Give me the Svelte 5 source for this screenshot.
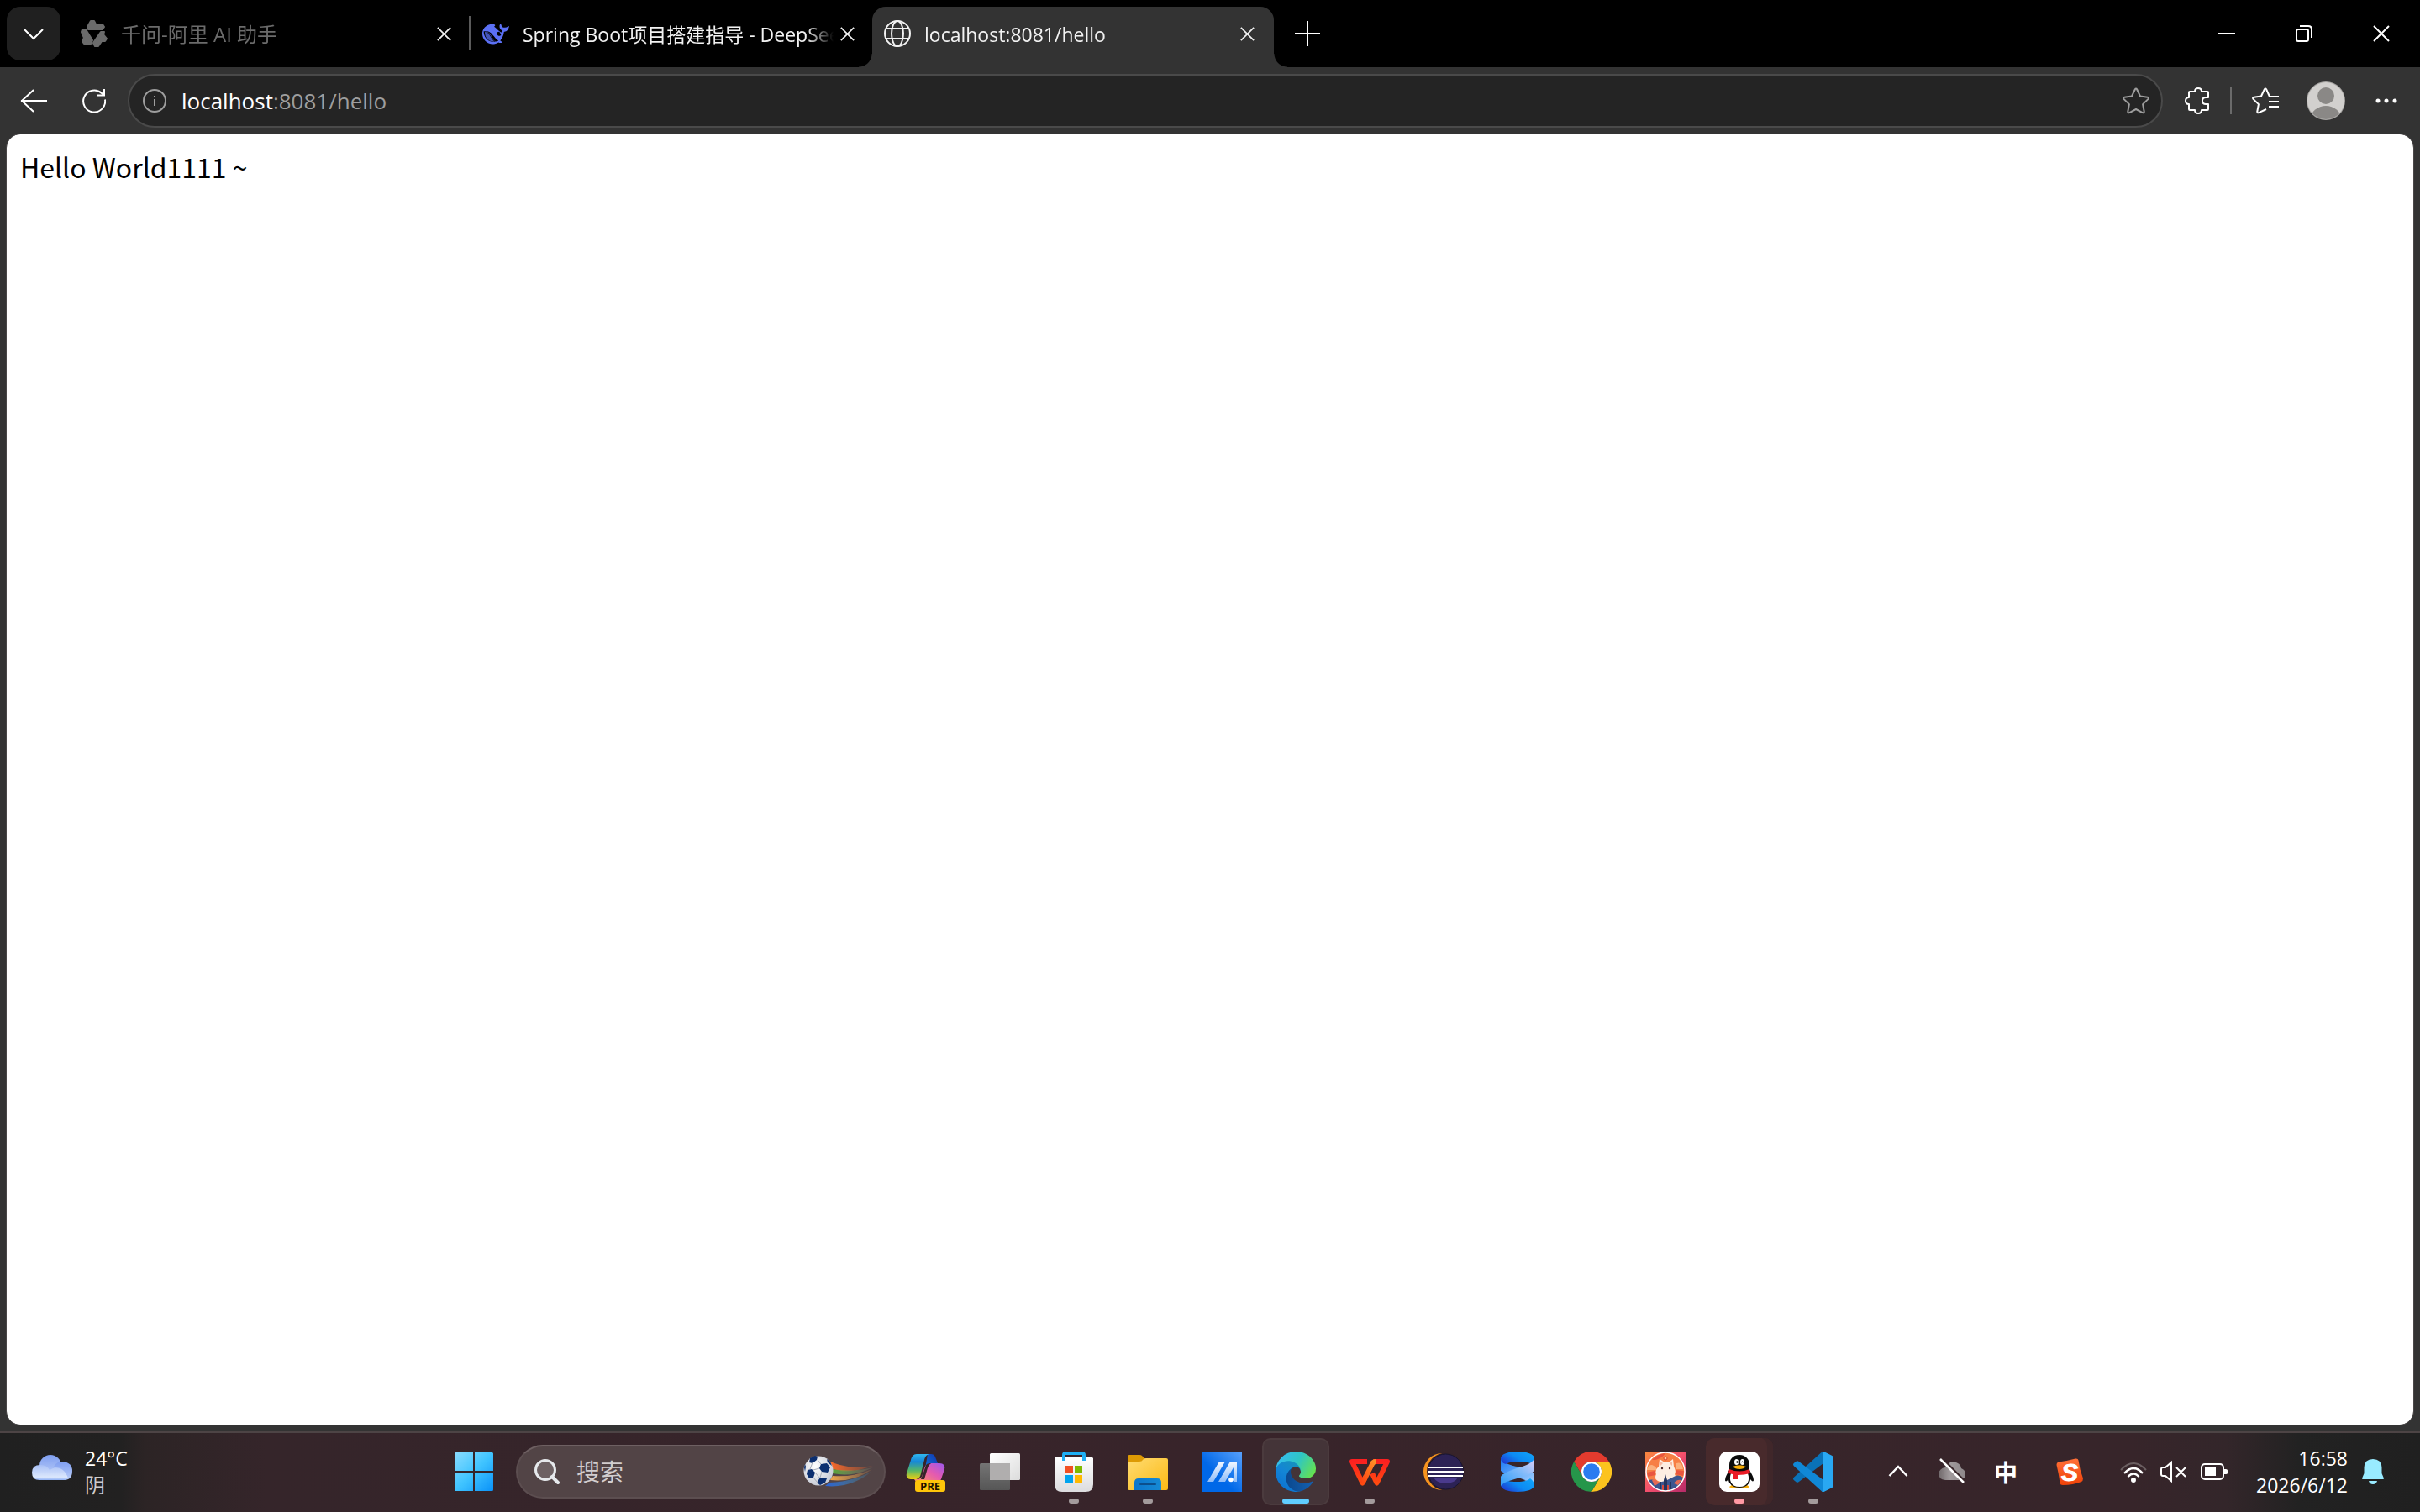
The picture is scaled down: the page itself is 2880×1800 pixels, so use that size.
<script>
  let url = $state("localhost:8081/hello")
  let host = $derived(url.split(":")[0])
  let rest = $derived(url.slice(host.length))
  let query = $state("")

  let tabs = [
    { icon: "qwen", title: "千问-阿里 AI 助手", dim: true },
    { icon: "whale", title: "Spring Boot项目搭建指导 - DeepSeek" },
    { icon: "globe", title: "localhost:8081/hello", active: true },
  ]

  let apps = [
    { id: "copilot", name: "Copilot" },
    { id: "taskview", name: "Task view" },
    { id: "store", name: "Microsoft Store", running: true },
    { id: "explorer", name: "File Explorer", running: true },
    { id: "armoury", name: "MyASUS" },
    { id: "edge", name: "Microsoft Edge", running: true, focused: true },
    { id: "wps", name: "WPS Office", running: true },
    { id: "eclipse", name: "Eclipse" },
    { id: "ribbon", name: "Ribbon" },
    { id: "chrome", name: "Google Chrome" },
    { id: "cat", name: "Cat" },
    { id: "qq", name: "QQ", running: true, alert: true },
    { id: "vscode", name: "Visual Studio Code", running: true },
  ]
</script>

{#snippet cross(size)}
  <svg width={size} height={size} viewBox="0 0 20 20" fill="none" stroke="currentColor" stroke-width="2">
    <path d="M1 1l18 18M19 1L1 19" />
  </svg>
{/snippet}

{#snippet favicon(icon)}
  <svg class="favicon" viewBox="0 0 32 32">
    {#if icon === "qwen"}
      <g fill="#6b6b6b" stroke="#6b6b6b" stroke-width="2" stroke-linejoin="round">
        <path d="M12 1h4l2 4h8l2 3-2 3H9l-1-3z" />
        <path d="M2 11h4l8 13-2 4H4l-2-3 2-4-3-7z" />
        <path d="M24 14h4l-1 3 4 5-2 3h-4l-4 6h-4l-2-4z" />
      </g>
    {:else if icon === "whale"}
      <path fill="#5b70f5" d="M31.6 7.2c-.5-.3-.8.2-1.100.4-1.300 1-2.700 1.400-4.200 1.200-1.200.2-2.300-.3-3-1.300-.6-1.200-.9-2.100-1-3-.2-.5-.8-.6-1.100-.1-.7 1.300-.9 2.600-.6 4 .3 1.500 1.200 2.700 2.400 3.600.4.3.400.700.200 1.200l-.6 1.600c-1.400-.6-2.600-1.500-3.700-2.700-1.600-1.700-2.900-3.200-4.800-4.400.9-.8 1.900-2 .5-2.500C12 4.500 9.400 4.700 6.900 5.700 2.900 7.300 0 11.400 0 16.100c0 6.500 5 12.200 11.400 12.400 2.900.1 5.500-.5 7.800-2.100.8.400 3 .9 4 .3.900-.5.300-.9-.1-1.100-1-.5-1.200-.8-1.700-1.400 2-2.300 3.700-5.500 4.200-9.200.1-.8 0-1.200.8-1.300 3-.3 4.700-2.600 5.300-5.500.1-.4.200-.8-.1-1zM16 25.600c-3.200-2.500-4.700-5.400-6.100-8.100C8.600 15.200 6 13.500 2.800 13.100c1-.3 3.300-.1 5 .7 3.700 1.700 5.600 5.300 8.100 8 1 1.100 2.100 2 3.300 2.600-1 .7-2.100 1.100-3.200 1.200zM21.300 18.500c-.8.3-1.700.300-2.400-.1-1.400-.8-1.400-2.300-.9-3.900.6-1.100 2-.9 2.800-.1.600.8.500 1.600 1.300 2.500.4.700-.1 1.400-.8 1.600z" />
      <path fill="#000" d="M1.600 13.200c3.200-.3 6 1.200 8 4.600 1.700 3 3.400 5.600 6.300 7.800-5 1.300-9.800-1-12.100-4.800-1.500-2.500-2.200-5-2.200-7.600z" />
      <path fill="#5b70f5" d="M3 14c2.500.1 4.600 1.700 6 4.300 1.500 2.800 3.200 5.300 5.500 7.300-4.400.3-8-1.600-10-5C3.400 18.500 3 16.200 3 14z" opacity=".75" />
    {:else}
      <g fill="none" stroke="#f2f2f2" stroke-width="2">
        <circle cx="16" cy="16" r="15" />
        <ellipse cx="16" cy="16" rx="7" ry="15" />
        <path d="M2 10h28M2 22h28" />
      </g>
    {/if}
  </svg>
{/snippet}

{#snippet appIcon(id)}
  <svg class="app-icon" viewBox="0 0 48 48">
    {#if id === "copilot"}
      <path fill="url(#cp-dark)" d="M26 3h4c4 0 5 3 6 6l2 5h-6c-5 0-7 2-8 6l-2 6z" />
      <path fill="url(#cp-left)" d="M13 3h16c-4 0-6 3-7 7l-4 16c-1 5-3 7-7 7H6c-4 0-6-3-5-7L6 10c1-4 3-7 7-7z" />
      <path fill="url(#cp-right)" d="M32 14h8c5 0 7 3 6 7l-3 9c-1 4-3 7-7 7H17c-4 0-5-1-7-4h2c5 0 7-2 8-6l2-7c1-4 4-6 10-6z" />
      <path fill="#38242a" d="M24 16c2-2 4-2 6-2-3 2-4 5-5 9l-3 10h-4l3-8z" />
      <rect x="11" y="34" width="36" height="14" rx="3" fill="#ffc60a" />
      <text x="29" y="45.500" text-anchor="middle" class="badge">PRE</text>
    {:else if id === "taskview"}
      <rect x="0" y="14" width="36" height="32" rx="1.500" fill="url(#tv-back)" />
      <rect x="12" y="2" width="36" height="32" rx="1.500" fill="url(#tv-front)" />
      <path fill="#b0aeae" d="M12 14h24v20H13.500a1.500 1.500 0 0 1-1.500-1.500z" />
    {:else if id === "store"}
      <path fill="url(#st-bag)" d="M2 7h44l1 1v31q0 9-9 9H10q-9 0-9-9V8z" />
      <path d="M12 11V4q0-2 2-2h20q2 0 2 2v7" fill="none" stroke="#1fb0f5" stroke-width="4" />
      <path fill="#f25022" d="M14 17h9v9h-9z" />
      <path fill="#7fba00" d="M25 17h9v9h-9z" />
      <path fill="#00a4ef" d="M14 28h9v9h-9z" />
      <path fill="#ffb900" d="M25 28h9v9h-9z" />
    {:else if id === "explorer"}
      <path fill="#dd9a04" d="M0 6q0-2 2-2h12q2 0 3 1l4 4v6H0z" />
      <path fill="url(#ex-body)" d="M0 12h14q3 0 4-2l1-1q1-1 3-1h24q2 0 2 2v34q0 2-2 2H2q-2 0-2-2z" />
      <path fill="url(#ex-blue)" d="M8 46V37q0-5 5-5h22q5 0 5 5v9z" />
      <path stroke="#0c4f8c" stroke-width="2" stroke-linecap="round" d="M15 39h18" />
    {:else if id === "armoury"}
      <rect width="48" height="48" fill="url(#ar-bg)" />
      <path fill="url(#ar-fg)" d="M7 36l14-24h7L14 36zM20 36l14-24h8v24h-4V19L28 36z" />
      <circle cx="35" cy="33.500" r="2.800" fill="#fff" />
    {:else if id === "edge"}
      <g transform="scale(.1875) translate(-4.630 -4.920)">
        <path fill="url(#ed-dark)" d="M235.680 195.460a93.730 93.730 0 0 1-10.540 4.710 101.870 101.870 0 0 1-35.900 6.460c-47.320 0-88.540-32.550-88.540-74.320A31.480 31.480 0 0 1 117.130 105c-42.800 1.800-53.800 46.400-53.800 72.530 0 73.880 68.090 81.370 82.760 81.370 7.910 0 19.840-2.300 27-4.560l1.310-.44a128.340 128.340 0 0 0 66.600-52.800 4 4 0 0 0-5.320-5.640z" />
        <path fill="url(#ed-mid)" d="M110.340 246.340A79.200 79.200 0 0 1 87.600 225a80.720 80.720 0 0 1 29.530-120c3.120-1.470 8.450-4.130 15.540-4a32.350 32.350 0 0 1 25.690 13 31.880 31.880 0 0 1 6.360 18.660c0-.21 24.460-79.600-80-79.600-43.900 0-80 41.660-80 78.210a130.150 130.150 0 0 0 12.110 56 128 128 0 0 0 156.380 67.110 75.550 75.550 0 0 1-62.780-8z" />
        <path fill="url(#ed-top)" d="M156.940 153.780c-.81 1.050-3.300 2.500-3.300 5.660 0 2.610 1.700 5.120 4.720 7.230 14.380 10 41.490 8.680 41.560 8.680a59.560 59.560 0 0 0 30.270-8.350 61.380 61.380 0 0 0 30.430-52.880c.26-22.410-8-37.310-11.340-43.910C228.090 28.760 182.350 4.920 132.610 4.920a128 128 0 0 0-128 126.200c.48-36.540 36.800-66.050 80-66.050 3.500 0 23.460.34 42 10.070 16.340 8.580 24.900 18.940 30.850 29.210 6.180 10.670 7.280 24.150 7.280 29.520s-2.740 13.330-7.800 19.910z" />
      </g>
    {:else if id === "wps"}
      <g fill="none" stroke-width="6" stroke-linejoin="round">
        <path stroke="url(#wp-red)" d="M21 12H3l12.500 25.500 4-8" />
        <path stroke="url(#wp-red)" d="M28 12h17L32.500 37.500 27 26" />
        <path stroke="url(#wp-orange)" d="M15.500 37.500L27 15q1-3 5-3" />
      </g>
    {:else if id === "eclipse"}
      <circle cx="22" cy="24" r="22" fill="#f7941e" />
      <circle cx="26.500" cy="24" r="22.500" fill="#38242a" />
      <circle cx="26.500" cy="24" r="21" fill="#2c2255" stroke="#171430" />
      <path fill="#4a3a8c" d="M12 31h29q-4 7-14.500 7T12 31z" />
      <g fill="#fff">
        <path d="M6 18h41v2H6zM5 23h43v2.500H5zM6 28h41v2H6z" />
      </g>
    {:else if id === "ribbon"}
      <path fill="url(#rb-dark)" d="M4 8v15q8 6 20 9 14 3 20 8V26q-8-6-20-8Q10 16 4 8z" />
      <path fill="url(#rb-top)" d="M4 8c0-5 9-8 20-8s20 3 20 8c0 3-2 5-5 6-4-2-9-2-15-2s-11 1-14 3c-4-1-6-4-6-7z" />
      <path fill="url(#rb-top)" d="M4 40c0-3 2-5 5-7 4 3 9 3 15 3s12-1 15-4c3 2 5 5 5 8 0 5-9 8-20 8S4 45 4 40z" />
      <path fill="#38242a" d="M13 14q10-4 22 0l-10 4q-7-1-12-4zM17 34l8-3 8 3q-8 3-16 0z" />
      <path fill="url(#rb-band)" d="M4 41V30c2-4 9-6 16-9 10-3 20-6 24-12v13c-2 5-10 6-17 9-9 3-18 4-23 10z" />
    {:else if id === "chrome"}
      <path fill="#e33b2e" d="M3.200 12a24 24 0 0 1 41.600 0H24a12 12 0 0 0-10.400 18z" />
      <path fill="#fcc31e" d="M44.800 12A24 24 0 0 1 24 48l10.400-18A12 12 0 0 0 24 12z" />
      <path fill="#26964a" d="M24 48A24 24 0 0 1 3.200 12l10.400 18a12 12 0 0 0 20.800 0z" />
      <circle cx="24" cy="24" r="12" fill="#fff" />
      <circle cx="24" cy="24" r="9.800" fill="#2b7bf0" />
    {:else if id === "cat"}
      <rect width="48" height="48" fill="url(#ct-bg)" />
      <circle cx="24" cy="24" r="23" fill="#f77f45" />
      <path fill="#fbb07c" d="M2 20q4-6 8-3 3 1 4 5H2zM37 14q5-2 7 3l1 4h-9z" />
      <path fill="#e9563f" d="M8 10q8-8 16-8-4 6-12 8zM36 22l10 1-1 6-9-2zM2 25l9-2 1 5-9 2z" />
      <circle cx="24" cy="8" r="2" fill="#ffd0a0" stroke="#d8432f" />
      <path fill="#fdeee2" d="M16 18l1-9 6 4q3-1 5 0l5-4 1 9q3 5 1 9 3 5-2 8l-9 4-9-4q-5-3-2-8-2-5 3-9z" />
      <path fill="#f7b9a0" d="M18 12l3 2-3 3zM32 12l-3 2 3 3z" />
      <circle cx="20" cy="20" r="1.200" fill="#4b2b2b" />
      <circle cx="29" cy="20" r="1.200" fill="#4b2b2b" />
      <path fill="#3c568f" d="M4 34q6-2 11 3l9-2 8-4q7-5 13 0-2 9-11 14l-10 2-10-2Q6 41 4 34z" />
      <path fill="#e56a55" d="M8 34q5-2 8 4l-5 3zM34 38q3-5 9-4l-4 6z" />
      <path fill="#26345e" d="M24 27l2 7v13h-4V34zM17 36h2v11h-2zM29 36h2v11h-2z" />
      <path fill="#d94a3e" d="M20 40h2v8h-2zM26 40h2v8h-2z" />
      <circle cx="24" cy="24" r="23" fill="none" stroke="#fff" stroke-width="1.500" />
    {:else if id === "qq"}
      <rect width="48" height="48" rx="9" fill="#fff" />
      <path fill="#f9ae08" d="M12 42q3-3 7-3h10q4 0 7 3 0 1-2 1H14q-2 0-2-1z" />
      <path fill="#0b0b0b" d="M24 4c8 0 12 6 12 12v6c2 4 5 8 5 12 0 2-2 2-4-1 0 5-5 10-13 10S11 38 11 33c-2 3-4 3-4 1 0-4 3-8 5-12v-6C12 10 16 4 24 4z" />
      <path fill="#fff" d="M14 26h20c3 8 0 16-10 16S11 34 14 26z" />
      <ellipse cx="20.500" cy="12.500" rx="2.500" ry="3.500" fill="#fff" />
      <ellipse cx="27.500" cy="12.500" rx="2.500" ry="3.500" fill="#fff" />
      <circle cx="21.500" cy="12.500" r="1.200" />
      <path d="M26 13q1.500-2 3 0" fill="none" stroke="#000" />
      <path fill="#f9ae08" d="M16 18q8-3.500 16 0-3 3-8 3t-8-3z" />
      <path fill="#eb1c26" d="M12 21q12 5 24 0l1 5q-7 2-15 2v5h-6v-6l-5-1z" />
    {:else if id === "vscode"}
      <path fill="#0a72b8" d="M36 0v14L6.500 36.300q-1.500 1-3 0L.8 34q-1.600-1.600 0-3.200L33 1.500Q34.500 0 36 0z" />
      <path fill="#1088d6" d="M36 48V34L6.500 11.700q-1.500-1-3 0L.8 14q-1.600 1.600 0 3.200L33 46.500q1.500 1.500 3 1.500z" />
      <path fill="#29a8f2" d="M34 47.500q2-.5 2-3V3.500q0-2.500-2-3 1-1 3-.200L46.500 5Q48 6 48 8v32q0 2-1.500 3L37 47.700q-2 .8-3-.200z" />
    {/if}
  </svg>
{/snippet}

<svg class="defs" width="0" height="0" aria-hidden="true">
  <defs>
    <linearGradient id="cp-dark" x1="0" y1="1" x2="1" y2="0"><stop offset="0" stop-color="#0a7be0" /><stop offset="1" stop-color="#1336b0" /></linearGradient>
    <linearGradient id="cp-left" x1="0" y1="0" x2="0" y2="1"><stop offset="0" stop-color="#30b8f0" /><stop offset=".3" stop-color="#1687d8" /><stop offset=".65" stop-color="#55b768" /><stop offset="1" stop-color="#f0d010" /></linearGradient>
    <linearGradient id="cp-right" x1="1" y1="0" x2="0" y2="1"><stop offset="0" stop-color="#9a58ee" /><stop offset=".45" stop-color="#e45ab0" /><stop offset="1" stop-color="#ff9a5c" /></linearGradient>
    <linearGradient id="tv-back" x1="0" y1="0" x2="0" y2="1"><stop offset="0" stop-color="#747474" /><stop offset="1" stop-color="#565656" /></linearGradient>
    <linearGradient id="tv-front" x1="0" y1="0" x2="1" y2="1"><stop offset="0" stop-color="#fff" /><stop offset="1" stop-color="#dcdcdc" /></linearGradient>
    <linearGradient id="st-bag" x1="0" y1="0" x2="0" y2="1"><stop offset="0" stop-color="#fff" /><stop offset="1" stop-color="#dcdcde" /></linearGradient>
    <linearGradient id="ex-body" x1="0" y1="0" x2="1" y2="1"><stop offset="0" stop-color="#ffdc72" /><stop offset="1" stop-color="#fbb914" /></linearGradient>
    <linearGradient id="ex-blue" x1="0" y1="0" x2="1" y2="0"><stop offset="0" stop-color="#0c76cc" /><stop offset="1" stop-color="#168ad4" /></linearGradient>
    <linearGradient id="ar-bg" x1="1" y1="0" x2=".4" y2=".6"><stop offset="0" stop-color="#58a0fb" /><stop offset="1" stop-color="#0068e8" /></linearGradient>
    <linearGradient id="ar-fg" x1="0" y1="1" x2="0" y2="0"><stop offset="0" stop-color="#8fbdf8" /><stop offset="1" stop-color="#f4f8ff" /></linearGradient>
    <linearGradient id="ed-dark" x1="0" y1=".5" x2="1" y2=".5"><stop offset="0" stop-color="#0b478c" /><stop offset="1" stop-color="#1460b0" /></linearGradient>
    <linearGradient id="ed-mid" x1=".8" y1="0" x2=".2" y2="1"><stop offset="0" stop-color="#1794b8" /><stop offset=".5" stop-color="#1385d6" /><stop offset="1" stop-color="#0a6fd0" /></linearGradient>
    <linearGradient id="ed-top" x1="0" y1=".3" x2="1" y2=".7"><stop offset="0" stop-color="#35bdf2" /><stop offset=".5" stop-color="#2fc6c4" /><stop offset="1" stop-color="#66e24e" /></linearGradient>
    <linearGradient id="wp-red" x1="0" y1="0" x2="0" y2="1"><stop offset="0" stop-color="#fb2020" /><stop offset="1" stop-color="#ff4a10" /></linearGradient>
    <linearGradient id="wp-orange" x1="1" y1="0" x2="0" y2="1"><stop offset="0" stop-color="#ff9428" /><stop offset="1" stop-color="#ff4412" /></linearGradient>
    <linearGradient id="rb-dark" x1="0" y1="0" x2="1" y2="1"><stop offset="0" stop-color="#1a78f4" /><stop offset="1" stop-color="#a8d4ff" /></linearGradient>
    <linearGradient id="rb-top" x1="0" y1=".8" x2="1" y2=".2"><stop offset="0" stop-color="#1f38d0" /><stop offset=".5" stop-color="#0c8af4" /><stop offset="1" stop-color="#10a2f8" /></linearGradient>
    <linearGradient id="rb-band" x1="0" y1="1" x2="1" y2="0"><stop offset="0" stop-color="#2c9cf8" /><stop offset=".6" stop-color="#86bcfa" /><stop offset="1" stop-color="#dccdf6" /></linearGradient>
    <linearGradient id="ct-bg" x1="0" y1="0" x2="1" y2="1"><stop offset="0" stop-color="#f98a3c" /><stop offset=".5" stop-color="#f4506c" /><stop offset="1" stop-color="#b42a68" /></linearGradient>
    <linearGradient id="win" x1="0" y1="0" x2="1" y2="1"><stop offset="0" stop-color="#8adcff" /><stop offset=".5" stop-color="#40c4ff" /><stop offset="1" stop-color="#0a92f8" /></linearGradient>
    <linearGradient id="cloud" x1="0" y1="0" x2="0" y2="1"><stop offset="0" stop-color="#7f9ef0" /><stop offset="1" stop-color="#bccff8" /></linearGradient>
    <linearGradient id="cloud-front" x1="0" y1="0" x2="0" y2="1"><stop offset="0" stop-color="#a9c0f6" /><stop offset=".8" stop-color="#dbe7fc" /><stop offset="1" stop-color="#8fb0f4" /></linearGradient>
    <linearGradient id="sogou" x1="0" y1="0" x2="0" y2="1"><stop offset="0" stop-color="#ff7038" /><stop offset="1" stop-color="#f04208" /></linearGradient>
    <linearGradient id="gray-cloud" x1="0" y1="0" x2="1" y2="0"><stop offset="0" stop-color="#6f686a" /><stop offset=".4" stop-color="#a09a9c" /><stop offset="1" stop-color="#8d8789" /></linearGradient>
    <radialGradient id="ball" cx=".4" cy=".35" r=".7"><stop offset="0" stop-color="#fff" /><stop offset="1" stop-color="#c4c8d4" /></radialGradient>
    <linearGradient id="tail-red"><stop offset="0" stop-color="#ff6a28" /><stop offset="1" stop-color="#ff6a28" stop-opacity=".1" /></linearGradient>
    <linearGradient id="tail-green"><stop offset="0" stop-color="#58a838" /><stop offset="1" stop-color="#a0a080" stop-opacity=".1" /></linearGradient>
    <linearGradient id="tail-gold"><stop offset="0" stop-color="#f0a850" /><stop offset="1" stop-color="#f0a850" stop-opacity=".1" /></linearGradient>
    <linearGradient id="tail-blue"><stop offset="0" stop-color="#2a62d8" /><stop offset="1" stop-color="#40a8d0" stop-opacity=".1" /></linearGradient>
  </defs>
</svg>

<div class="screen">
  <header class="tab-bar">
    <button class="tab-menu" aria-label="Tab actions">
      <svg width="28" height="28" viewBox="0 0 28 28" fill="none" stroke="currentColor" stroke-width="2">
        <path d="M3 9l11 11L25 9" />
      </svg>
    </button>
    {#each tabs as tab}
      <div class="tab" class:active={tab.active} class:dim={tab.dim}>
        <button class="tab-title">
          {@render favicon(tab.icon)}
          <span>{tab.title}</span>
        </button>
        <button class="tab-close" aria-label="Close tab">{@render cross(17)}</button>
      </div>
    {/each}
    <button class="new-tab" aria-label="New tab">
      <svg width="30" height="30" viewBox="0 0 30 30" stroke="currentColor" stroke-width="2">
        <path d="M15 0v30M0 15h30" />
      </svg>
    </button>
    <div class="window-controls">
      <button aria-label="Minimize">
        <svg width="20" height="20" viewBox="0 0 20 20" stroke="currentColor" stroke-width="2"><path d="M0 10h20" /></svg>
      </button>
      <button aria-label="Restore">
        <svg width="20" height="20" viewBox="0 0 20 20" fill="none" stroke="currentColor" stroke-width="2">
          <rect x="1" y="5" width="14" height="14" rx="2" />
          <path d="M5 1h10q4 0 4 4v10" />
        </svg>
      </button>
      <button aria-label="Close">{@render cross(20)}</button>
    </div>
  </header>

  <nav class="toolbar">
    <button class="tool" aria-label="Back">
      <svg width="32" height="28" viewBox="0 0 32 28" fill="none" stroke="currentColor" stroke-width="2">
        <path d="M32 14H1M16 1L2 14l14 13" />
      </svg>
    </button>
    <button class="tool" aria-label="Refresh">
      <svg width="28" height="28" viewBox="0 0 28 28" fill="none" stroke="currentColor" stroke-width="2">
        <path d="M27 12.500A13 13 0 1 1 23 5l2 2" />
        <path d="M26 0v7.500h-9" />
      </svg>
    </button>
    <div class="address">
      <button class="info" aria-label="Site information">
        <svg width="28" height="28" viewBox="0 0 28 28" fill="none" stroke="currentColor" stroke-width="2">
          <circle cx="14" cy="14" r="13" />
          <path d="M14 12v8M14 8v2" />
        </svg>
      </button>
      <div class="url">
        <input aria-label="Address" bind:value={url} />
        <span class="url-text" aria-hidden="true"><b>{host}</b>{rest}</span>
      </div>
      <button class="star" aria-label="Add to favorites">
        <svg width="32" height="32" viewBox="0 0 32 32" fill="none" stroke="currentColor" stroke-width="2" stroke-linejoin="round">
          <path d="M14.800 2.500q1.200-2 2.400 0l3.800 8 8.700 1.200q2 .5.800 2.200l-6.400 6.200 1.600 8.700q.1 2-1.900 1.300L16 26l-7.800 4.100q-2 .7-1.900-1.300l1.600-8.700-6.400-6.200q-1.200-1.700.8-2.200L11 10.500z" />
        </svg>
      </button>
    </div>
    <button class="tool" aria-label="Extensions">
      <svg width="32" height="32" viewBox="0 0 32 32" fill="none" stroke="currentColor" stroke-width="2" stroke-linejoin="round">
        <path d="M12 5q0-4 4-4t4 4h7q1 0 1 1v6h-3q-4 0-4 4t4 4h3v6q0 1-1 1h-7q0 4-4 4t-4-4H6q-1 0-1-1v-6q-4 0-4-4t4-4V6q0-1 1-1z" />
      </svg>
    </button>
    <span class="divider"></span>
    <button class="tool" aria-label="Favorites">
      <svg width="32" height="32" viewBox="0 0 32 32" fill="none" stroke="currentColor" stroke-width="2" stroke-linejoin="round">
        <path d="M32 11H21l-3.800-8.500q-1.200-2-2.400 0L11 10.500l-8.700 1.200q-2 .5-.8 2.200l6.400 6.200-1.600 8.700q-.1 2 1.900 1.300L17 26M20 17h12M20 23h12" />
      </svg>
    </button>
    <button class="tool" aria-label="Profile">
      <svg width="46" height="46" viewBox="0 0 46 46">
        <clipPath id="face"><circle cx="23" cy="23" r="22" /></clipPath>
        <circle cx="23" cy="23" r="23" fill="#a5a3a1" />
        <circle cx="23" cy="23" r="22" fill="#d2d0ce" />
        <circle cx="23" cy="17" r="10" fill="#8a8886" />
        <ellipse cx="23" cy="44" rx="18" ry="15" fill="#8a8886" clip-path="url(#face)" />
      </svg>
    </button>
    <button class="tool" aria-label="Settings and more">
      <svg width="28" height="6" viewBox="0 0 28 6" fill="currentColor">
        <circle cx="4" cy="3" r="2.500" /><circle cx="14" cy="3" r="2.500" /><circle cx="24" cy="3" r="2.500" />
      </svg>
    </button>
  </nav>

  <main class="page">Hello World1111 ~</main>

  <footer class="taskbar">
    <button class="weather">
      <svg width="48" height="30" viewBox="0 0 48 30">
        <circle cx="22" cy="13" r="13" fill="url(#cloud)" />
        <path fill="url(#cloud)" d="M26 14q3-6 10-6 12 1 12 11 0 11-10 11H20z" />
        <path fill="url(#cloud-front)" d="M10 12q8 0 11 6l6-3q12 0 16 13-2 2-5 2H9Q0 30 0 21t10-9z" />
      </svg>
      <span class="stack"><span>24°C</span><span class="soft">阴</span></span>
    </button>

    <div class="apps">
      <button class="app" aria-label="Start">
        <svg width="46" height="46" viewBox="0 0 46 46" fill="url(#win)">
          <path d="M1.500 0H22v22H0V1.500Q0 0 1.500 0zM24 0h20.500Q46 0 46 1.500V22H24zM0 24h22v22H1.500Q0 46 0 44.500zM24 24h22v20.500q0 1.500-1.500 1.500H24z" />
        </svg>
      </button>
      <label class="search">
        <svg width="30" height="30" viewBox="0 0 30 30" fill="none" stroke="#e6e9ec" stroke-linecap="round">
          <circle cx="13" cy="13" r="11.500" stroke-width="3" fill="#6d6163" />
          <path d="M21 21l7 7" stroke-width="4" />
        </svg>
        <input type="text" placeholder="搜索" aria-label="搜索" bind:value={query} />
        <svg width="84" height="40" viewBox="0 0 84 40">
          <path fill="url(#tail-red)" d="M30 7q22 11 53 6-30 11-50 3z" />
          <path fill="url(#tail-green)" d="M34 17q24 4 49-2-24 12-48 7z" />
          <path fill="url(#tail-gold)" d="M35 25q24 2 47-8-22 16-50 13z" />
          <path fill="url(#tail-blue)" d="M31 33q26-1 50-13-24 20-55 17z" />
          <circle cx="18" cy="19" r="17.500" fill="url(#ball)" />
          <g fill="#0c2f70">
            <path d="M21 11l7-1 4 5-3 6-7-1-3-4z" />
            <path d="M8 4l6-3 3 1-1 4-5 4-4-1z" />
            <path d="M5 18l5-1 4 4-2 6-5 1-3-5z" />
            <path d="M20 27l8 1-2 5-6 3-4-3z" />
            <path d="M28 5l4 3 2 5-5-4z" />
            <path d="M1 15l1-4 1 3-1 6z" />
          </g>
          <g fill="none" stroke="#a6abb8">
            <path d="M17 6l4 5M19 16l-7 2M11 9l-3 8M22 20l-2 7M14 21l6 7M12 27l5 6M29 21l3 1" />
          </g>
        </svg>
      </label>
      {#each apps as app}
        <button class="app" class:focused={app.focused} class:alert={app.alert} aria-label={app.name}>
          {@render appIcon(app.id)}
          {#if app.running}<span class="dot"></span>{/if}
        </button>
      {/each}
    </div>

    <div class="tray">
      <button aria-label="Show hidden icons">
        <svg width="24" height="24" viewBox="0 0 24 24" fill="none" stroke="currentColor" stroke-width="2.500">
          <path d="M1.500 17L12 6l10.500 11" />
        </svg>
      </button>
      <button aria-label="OneDrive">
        <svg width="32" height="32" viewBox="0 0 32 32">
          <path fill="url(#gray-cloud)" d="M8 26Q0 25 0 18.500 1 12 8 11q3-7 10-6.500Q26 5 27 12q5 2 5 7 0 6-6 7z" />
          <path d="M3 0l28 28" stroke="#38262a" stroke-width="4" />
          <path d="M2 1l28 28" stroke="#fff" stroke-width="2.500" />
        </svg>
      </button>
      <button class="ime">中</button>
      <button class="sogou" aria-label="Sogou">
        <svg width="32" height="32" viewBox="0 0 32 32">
          <path fill="url(#sogou)" d="M3 4.500Q14 3 23 .5q3-.5 3.500 2Q28 14 32 24q0 3-2 4-10 4-22 4-3 0-3.500-2.500Q3 18 .5 8q0-3 2.500-3.500z" />
          <text x="16" y="27" text-anchor="middle" class="sogou-s">S</text>
        </svg>
      </button>
      <button class="quick" aria-label="Network, sound, battery">
        <svg width="32" height="32" viewBox="0 0 32 32" fill="none" stroke="#fff" stroke-width="2">
          <path d="M1 14q15-16 30 0" stroke="#6b5f61" />
          <path d="M5 18q11-12 22 0M9.500 22q6.500-7 13 0" stroke-width="2.500" />
          <circle cx="16" cy="26" r="3" fill="#fff" stroke="none" />
        </svg>
        <svg width="32" height="32" viewBox="0 0 32 32" fill="none" stroke="#fff" stroke-width="2">
          <path d="M1 13q0-2 2-2h3l7-6v22l-7-6H3q-2 0-2-2zM19 11l11 11M30 11L19 22" />
        </svg>
        <svg width="32" height="32" viewBox="0 0 32 32" fill="none" stroke="#fff" stroke-width="2">
          <rect x="1" y="7" width="26" height="18" rx="4" />
          <path fill="#fff" stroke="none" d="M5 11h13v10H5zM28 13h2q2 0 2 1.500v3q0 1.500-2 1.500h-2z" />
        </svg>
      </button>
      <button class="clock">
        <span class="stack"><span>16:58</span><span>2026/6/12</span></span>
        <svg width="32" height="32" viewBox="0 0 32 32" fill="#99ebff">
          <path d="M16 1q10 0 10.500 10v7l2.500 6q0 1-1 1H4q-1 0-1-1l2.500-6v-7Q6 1 16 1zM11 27h10q-1 4-5 4t-5-4z" />
        </svg>
      </button>
    </div>
  </footer>
</div>

<style>
  :global(body) {
    margin: 0;
    background: #333333;
  }

  .defs {
    position: absolute;
  }

  .screen {
    min-height: 100vh;
    display: flex;
    flex-direction: column;
    background: #333333;
    color: #ffffff;
    font-family: "Open Sans", "Noto Sans CJK SC", sans-serif;
    font-size: 23px;
  }

  button,
  input {
    padding: 0;
    border: 0;
    background: none;
    color: inherit;
    font: inherit;
  }

  button {
    display: flex;
    align-items: center;
    justify-content: center;
  }

  input {
    outline: 0;
  }

  svg {
    flex: none;
  }

  /* tabs */
  .tab-bar {
    height: 80px;
    display: flex;
    align-items: center;
    background: #000000;
  }

  .tab-menu {
    width: 64px;
    height: 64px;
    margin: 0 10px 0 8px;
    border-radius: 16px;
    background: #202020;
  }

  .tab {
    position: relative;
    flex: 0 1 478px;
    min-width: 0;
    height: 72px;
    margin-top: 8px;
    padding: 0 14px 8px;
    box-sizing: border-box;
    display: flex;
    align-items: center;
    color: #f2f2f2;
  }

  .tab.dim {
    border-right: 2px solid transparent;
    border-image: linear-gradient(transparent 12px, #5a5a5a 12px 52px, transparent 52px) 1;
  }

  .tab.dim .tab-title {
    color: #6b6b6b;
    font-size: 24px;
  }

  .tab.active {
    padding: 0 16px 8px 14px;
    border-radius: 16px 16px 0 0;
    background: #333333;
  }

  .tab.active::before,
  .tab.active::after {
    content: "";
    position: absolute;
    bottom: 0;
    width: 16px;
    height: 16px;
  }

  .tab.active::before {
    right: 100%;
    background: radial-gradient(circle at 0 0, transparent 15px, #333333 16px);
  }

  .tab.active::after {
    left: 100%;
    background: radial-gradient(circle at 100% 0, transparent 15px, #333333 16px);
  }

  .tab-title {
    flex: 1;
    min-width: 0;
    gap: 16px;
    justify-content: flex-start;
  }

  .tab-title span {
    flex: 1;
    padding-top: 2px;
    overflow: hidden;
    white-space: nowrap;
    text-align: left;
    line-height: 32px;
    mask-image: linear-gradient(to left, transparent, #000000 32px);
  }

  .favicon {
    width: 32px;
    height: 32px;
  }

  .tab-close {
    width: 32px;
    height: 32px;
  }

  .new-tab {
    width: 80px;
    height: 64px;
  }

  .window-controls {
    margin-left: auto;
    align-self: stretch;
    display: flex;
  }

  .window-controls button {
    width: 92px;
  }

  /* toolbar */
  .toolbar {
    height: 80px;
    padding: 0 4px;
    display: flex;
    align-items: center;
  }

  .tool {
    width: 72px;
    height: 64px;
  }

  .address {
    flex: 1;
    height: 64px;
    margin: 0 6px 0 4px;
    padding: 0 14px;
    box-sizing: border-box;
    display: flex;
    align-items: center;
    gap: 16px;
    border: 2px solid #4a4a4a;
    border-radius: 32px;
    background: #242424;
  }

  .info,
  .star {
    color: #9e9e9e;
  }

  .info {
    width: 32px;
  }

  .url {
    flex: 1;
    display: grid;
    font-size: 26px;
    line-height: 40px;
  }

  .url input,
  .url-text {
    grid-area: 1 / 1;
  }

  .url input {
    color: transparent;
    caret-color: #ffffff;
  }

  .url-text {
    color: #9e9e9e;
    pointer-events: none;
  }

  .url-text b {
    color: #ffffff;
    font-weight: normal;
  }

  .divider {
    width: 2px;
    height: 32px;
    margin: 0 4px 0 2px;
    background: #6b6b6b;
  }

  .page {
    flex: 1;
    margin: 0 8px 8px;
    padding: 14px 16px;
    border-radius: 16px;
    outline: 1px solid #4a4748;
    background: #ffffff;
    color: #000000;
    font-family: "Noto Sans CJK SC", sans-serif;
    font-size: 32px;
    line-height: 48px;
  }

  /* taskbar */
  .taskbar {
    height: 92px;
    padding-bottom: 2px;
    display: flex;
    align-items: center;
    border-top: 2px solid #4d4445;
    background: linear-gradient(
      to right,
      #202020,
      #222121 5%,
      #2c2425 6%,
      #35252a 11%,
      #38242a 50%,
      #37252a 88%,
      #33262a 92%,
      #222222 95%,
      #202020
    );
  }

  .weather {
    margin-left: 38px;
    gap: 15px;
  }

  .weather svg {
    margin-bottom: 10px;
  }

  .stack {
    display: flex;
    flex-direction: column;
    line-height: 32px;
    text-align: left;
  }

  .soft {
    color: #cfcccc;
    font-size: 24px;
  }

  .apps {
    margin-left: auto;
    display: flex;
    align-items: center;
    gap: 8px;
  }

  .app {
    position: relative;
    width: 80px;
    height: 80px;
    box-sizing: border-box;
    border-radius: 10px;
  }

  .app-icon {
    width: 48px;
    height: 48px;
  }

  .app.focused {
    border: 2px solid #4b3b3e;
    background: #443438;
  }

  .app.alert {
    background: #482a2c;
    box-shadow: inset -8px 0 0 -1px #40272a;
  }

  .dot {
    position: absolute;
    bottom: 2px;
    left: calc(50% - 6px);
    width: 12px;
    height: 6px;
    border-radius: 3px;
    background: #a39b9c;
  }

  .focused .dot {
    bottom: 0;
    left: calc(50% - 16px);
    width: 32px;
    background: #60cdff;
  }

  .alert .dot {
    background: #ff99a4;
  }

  .search {
    width: 440px;
    height: 64px;
    margin-left: 2px;
    padding: 0 12px 0 20px;
    box-sizing: border-box;
    display: flex;
    align-items: center;
    gap: 20px;
    border: 2px solid #5c4e50;
    border-top-color: #6e6062;
    border-radius: 32px;
    background: #524446;
  }

  .search input {
    flex: 1;
    min-width: 0;
    font-size: 28px;
  }

  .search input::placeholder {
    color: #d2cdce;
    opacity: 1;
  }

  .tray {
    margin-left: 29px;
    display: flex;
    align-items: center;
  }

  .tray button {
    width: 64px;
    height: 80px;
  }

  .tray .ime {
    font-family: "Noto Sans CJK SC", sans-serif;
    font-size: 28px;
    font-weight: bold;
  }

  .tray .sogou {
    margin: 0 12px;
  }

  .sogou svg {
    overflow: visible;
  }

  .tray .quick {
    width: 160px;
    gap: 16px;
  }

  .tray .clock {
    width: 213px;
    padding-right: 40px;
    box-sizing: border-box;
    justify-content: flex-end;
    gap: 14px;
  }

  .clock .stack {
    text-align: right;
  }

  .badge {
    font-family: "Open Sans", sans-serif;
    font-size: 13px;
    font-weight: bold;
    fill: #1c1400;
  }

  .sogou-s {
    font-family: "Liberation Sans", sans-serif;
    font-size: 30px;
    font-weight: bold;
    font-style: italic;
    fill: #ffffff;
    stroke: #ffffff;
  }

  @media only screen and (max-width: 1600px) {
    .weather .stack,
    .search {
      display: none;
    }
  }
</style>
